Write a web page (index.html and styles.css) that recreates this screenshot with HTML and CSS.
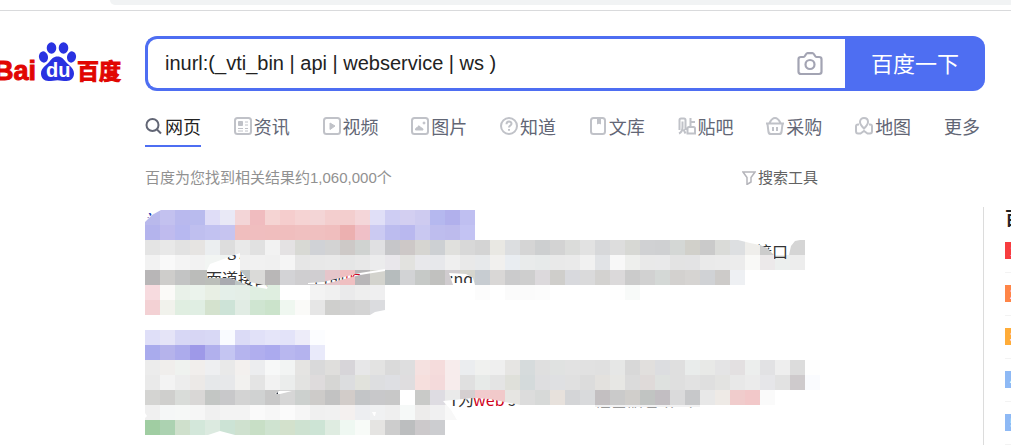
FILE: index.html
```html
<!DOCTYPE html>
<html lang="zh-CN">
<head>
<meta charset="utf-8">
<title>百度搜索</title>
<link rel="stylesheet" href="styles.css">
</head>
<body>
<div class="browser-edge"><div class="omnibox"></div></div>
<header class="header">
  <a class="logo" href="#" aria-label="百度">
    <svg width="125" height="50" viewBox="0 0 125 50">
      <text class="logo-latin" x="-6" y="41">Bai</text>
      <g fill="#2932e1">
        <ellipse cx="51.500" cy="9" rx="4.800" ry="5.800"/>
        <ellipse cx="63.500" cy="9" rx="4.800" ry="5.800"/>
        <ellipse cx="43.500" cy="18" rx="4.500" ry="5.700" transform="rotate(-12 43.500 18)"/>
        <ellipse cx="71.500" cy="18" rx="4.500" ry="5.700" transform="rotate(12 71.500 18)"/>
        <path d="M57.500 17.500c-4 0-6 2.500-8.200 5.300C46.500 26 41 29 41 34.500c0 4.500 3 7.500 7.500 7.500 3.500 0 6-.8 9-.8s5.500.8 9 .8c4.500 0 7.500-3 7.500-7.500 0-5.500-5.500-8.500-8.300-11.700-2.200-2.800-4.200-5.300-8.200-5.300z"/>
      </g>
      <text class="logo-du" x="46" y="38">du</text>
      <text class="logo-cjk" x="77" y="40">百度</text>
    </svg>
  </a>
  <form class="search">
    <input class="search-input" type="text" aria-label="搜索" value="inurl:(_vti_bin | api | webservice | ws )">
    <button class="camera" type="button" aria-label="按图片搜索">
      <svg width="26" height="24" viewBox="0 0 26 24" fill="none" stroke="#a3a4b3" stroke-width="2.200"><path d="M4 5h2.500c1.800 0 2-3.800 4-3.800h5c2 0 2.200 3.800 4 3.800H22c1.500 0 2.500.8 2.500 2.200v12.600c0 1.400-1 2.200-2.500 2.200H4c-1.500 0-2.500-.8-2.500-2.200V7.200C1.500 5.800 2.500 5 4 5z"/><circle cx="13" cy="12.500" r="4.500"/></svg>
    </button>
    <button class="submit" type="button">百度一下</button>
  </form>
</header>
<div class="main">
  <main class="content">
    <nav class="tabs">
      <a class="tab active" href="#"><svg class="icon" viewBox="0 0 18 18"><circle cx="7.500" cy="8" r="6"/><path d="M12 12.500l4 4"/></svg>网页</a>
      <a class="tab" href="#"><svg class="icon" viewBox="0 0 18 18"><rect x="1" y="1" width="16" height="16" rx="2.500"/><path class="solid" d="M4.500 4.500h4v4h-4z"/><path class="thin" d="M11 5h3M11 8h3M4 11.500h5M4 14h5M11 11.500h3M11 14h3"/></svg>资讯</a>
      <a class="tab" href="#"><svg class="icon" viewBox="0 0 18 18"><rect x="1" y="1" width="16" height="16" rx="2.500"/><path class="solid" d="M7 6l5 3-5 3.500z"/></svg>视频</a>
      <a class="tab" href="#"><svg class="icon" viewBox="0 0 18 18"><rect x="1" y="1" width="16" height="16" rx="2.500"/><circle class="solid" cx="13" cy="6" r="1"/><path class="solid" d="M4.500 13c-.5-2.500 2-2 2.500-3.500 1-1.500 2 0 2.500 1 1.500.5 2.500.5 2.500 2.500z"/></svg>图片</a>
      <a class="tab" href="#"><svg class="icon" viewBox="0 0 18 18"><circle cx="9" cy="9" r="8"/><path d="M6.500 7.300c0-3.500 5-3.500 5-.5 0 1.700-2.500 1.800-2.500 3.700M9 12v1.800"/></svg>知道</a>
      <a class="tab" href="#"><svg class="icon" viewBox="0 0 18 18"><rect x="2" y="1" width="14" height="16" rx="2.500"/><path class="solid" d="M8.500 2h3v5L10 6 8.500 7z"/></svg>文库</a>
      <a class="tab" href="#"><svg class="icon" viewBox="0 0 18 18"><path d="M1.500 13V3q0-1.500 1.500-1.500h3Q7.500 1.500 7.500 3v10M4.500 4.500V10q0 5-3.500 6.500M5.500 12.500l2 4M12.500 1v8.500M12.500 5H17M9.500 16.500v-5q0-1.500 1.500-1.500h4.500q1.500 0 1.500 1.500v5z"/></svg>贴吧</a>
      <a class="tab" href="#"><svg class="icon" viewBox="0 0 18 18"><path d="M0 6.500h18M1.500 7l1 8q.3 2 2.500 2h8q2.200 0 2.500-2l1-8M3.500 6Q6 1 9 1t5.500 5M7 10v4M11 10v4"/></svg>采购</a>
      <a class="tab" href="#"><svg class="icon" viewBox="0 0 18 18"><path d="M9 11.500C6 8.500 5 7 5 5c0-5.300 8-5.300 8 0 0 2-1 3.500-4 6.500zM4 7.500H3q-2 0-2 2V14q0 2.500 2 2.500h2.500L9 14l3.500 2.500H15q2 0 2-2.500V9.500q0-2-2-2h-1"/></svg>地图</a>
      <a class="tab" href="#">更多</a>
    </nav>
    <div class="tools">
      <span>百度为您找到相关结果约1,060,000个</span>
      <button class="filter" type="button"><svg width="14" height="14" viewBox="0 0 14 14" fill="none" stroke="#b5b5bb" stroke-width="1.500"><path d="M1 1h12L9 6.500V11l-4 2.500v-7z"/></svg>搜索工具</button>
    </div>
    <article class="result">
      <svg class="mosaic" width="690" height="105" viewBox="0 0 690 105">
        <defs>
          <clipPath id="a1"><path d="M0 3h9L7 5 0 10z"/></clipPath>
          <clipPath id="a2"><path d="M62 60l3-6 30-11v17l10 12 18 4-1 3-20-4-17-7H62z"/></clipPath>
          <clipPath id="a3"><path d="M163 73l15-1 37-9 25-4v2l-25 4-35 9h-17z"/></clipPath>
          <clipPath id="a4"><path d="M304 63l17 1 7 4 2 5h-22z"/></clipPath>
          <clipPath id="a5"><path d="M593 30l12 3 10 2 7 3 7 7v4h15l2-13 4-5 5-1z"/></clipPath>
        </defs>
        <g class="tiles" data-tiles="first"></g>
        <g class="brush">
          <path d="M0 0h16L7 5 0 12z"/>
          <path d="M62 60l3-6 30-11v17l10 12 18 4-1 3-20-4-17-7H62z"/>
          <path d="M163 73l15-1 37-9 25-4v2l-25 4-35 9h-17z"/>
          <path d="M304 63l17 1 7 4 2 7h-22z"/>
          <path d="M593 30l12 3 10 2 7 3 7 7h15l2-9 4-5 5-1z"/>
          <path d="M225 105l5-3 10-2v5z"/>
        </g>
        <g class="snippet">
          <g clip-path="url(#a1)"><text class="title" x="0" y="17">当</text></g>
          <g clip-path="url(#a2)"><text x="61" y="75">面道接口</text><text x="82" y="46">g /</text></g>
          <g clip-path="url(#a3)"><text x="168" y="75">目前<tspan class="hit">的web</tspan>接口</text></g>
          <g clip-path="url(#a4)"><text x="304" y="75">:nd</text></g>
          <g clip-path="url(#a5)"><text x="611" y="48">接口</text></g>
        </g>
      </svg>
    </article>
    <article class="result">
      <svg class="mosaic" width="690" height="105" viewBox="0 0 690 105">
        <defs>
          <clipPath id="b1"><path d="M298 71l30-3 17 1 30 6 25 2v1h-95z"/></clipPath>
          <clipPath id="b2"><path d="M450 77h105v1H450z"/></clipPath>
        </defs>
        <g class="tiles" data-tiles="second"></g>
        <g class="brush">
          <path d="M130 64l4-3h13l-12 3z"/>
          <path d="M63 105l12-4 15 4z"/>
          <path d="M0 83l2 3-2 2z"/>
          <path d="M227 82h4l-1 4h-1z"/>
          <path d="M298 71l30-3 17 1 30 6 25 2v13h-88l-6-10z"/>
        </g>
        <path fill="#f2f2f3" d="M450 75h105v2H450z"/>
        <path fill="#333b46" d="M131 64l2-2v2z"/>
        <g class="snippet">
          <g clip-path="url(#b1)"><text x="304" y="76">T<tspan x="313">为</tspan><tspan class="hit" x="328">web</tspan> s</text></g>
          <g clip-path="url(#b2)"><text class="faint" x="450" y="89">接口服务 的 方 法 与 调</text></g>
        </g>
      </svg>
    </article>
  </main>
  <aside class="side">
    <h2 class="side-title">百度热搜</h2>
    <ol class="hot">
      <li><span class="rank first">1</span></li>
      <li><span class="rank second">2</span></li>
      <li><span class="rank third">3</span></li>
      <li><span class="rank">4</span></li>
      <li><span class="rank">5</span></li>
    </ol>
  </aside>
</div>
<script src="mosaic.js"></script>
</body>
</html>
```
FILE: styles.css
```css
* { box-sizing: border-box; }
body {
  margin: 0;
  min-height: 100vh;
  display: flex;
  flex-direction: column;
  overflow: hidden;
  background: #fff;
  font-family: "Liberation Sans", "Noto Sans CJK SC", sans-serif;
}
a { color: inherit; text-decoration: none; }
button { border: 0; padding: 0; background: none; font: inherit; color: inherit; cursor: pointer; }
.browser-edge { height: 11px; padding-left: 110px; border-bottom: 1px solid #d9dadc; }
.omnibox { height: 5px; background: #f1f3f4; border-bottom-left-radius: 12px; }
.header { display: flex; align-items: center; padding: 25px 26px 0 0; }
.logo { flex: 0 0 145px; }
.logo svg { display: block; }
.logo-latin { font: bold 27px "Liberation Sans", sans-serif; fill: #e10602; stroke: #e10602; stroke-width: 1; }
.logo-du { font: bold 20px "Liberation Sans", sans-serif; fill: #fff; }
.logo-cjk { font: bold 22px "Noto Sans CJK SC", sans-serif; fill: #e10602; stroke: #e10602; stroke-width: 1; }
.search {
  flex: 1;
  display: flex;
  height: 55px;
  border: 3px solid #4e6ef2;
  border-right: 0;
  border-radius: 12px;
  background: #4e6ef2;
}
.search-input {
  flex: 1;
  min-width: 0;
  border: 0;
  outline: 0;
  padding: 0 0 0 17px;
  border-radius: 9px 0 0 9px;
  font: 20px "Liberation Sans", sans-serif;
  color: #222;
  background: #fff;
}
.camera { display: flex; align-items: center; padding: 0 22px 0 12px; background: #fff; }
.submit { width: 140px; padding-bottom: 4px; font-size: 22px; color: #fff; }
.main { flex: 1; display: flex; padding-left: 145px; }
.content { flex: 1; min-width: 0; }
.tabs { display: flex; justify-content: space-between; padding: 19px 3px 0 0; }
.tab {
  display: flex;
  align-items: center;
  gap: 2px;
  height: 37px;
  padding-bottom: 6px;
  font-size: 18px;
  white-space: nowrap;
  color: #626675;
}
.tab.active { color: #222; border-bottom: 2px solid #4e6ef2; padding-bottom: 4px; }
.icon { width: 18px; height: 18px; fill: none; stroke: #c0c2c8; stroke-width: 2; }
.icon .solid { fill: #c0c2c8; stroke-width: 1; }
.icon .thin { stroke-width: 1; }
.active .icon { stroke: #626675; }
.tools {
  display: flex;
  justify-content: space-between;
  max-width: 673px;
  margin: 19px 0 20px;
  font-size: 15px;
  line-height: 24px;
  color: #9195a3;
}
.tools span { color: #919191; }
.filter { display: flex; align-items: center; gap: 2px; color: #626262; }
.result { margin-bottom: 15px; }
.result:last-child { margin-bottom: 0; }
.mosaic { display: block; overflow: visible; }
.tiles { shape-rendering: crispEdges; }
.brush { fill: #fff; }
.snippet { font: 16px "Noto Sans CJK SC", sans-serif; fill: #333; }
.snippet .title { font-size: 20px; fill: #2440b3; }
.snippet .hit { fill: #d0021b; }
.snippet .faint { fill: #999; }
.side {
  flex: 0 0 28px;
  margin-top: 116px;
  padding-left: 21px;
  border-left: 1px solid #dcdcdc;
  overflow: hidden;
  white-space: nowrap;
}
.side-title { margin: 0 0 11px; font-size: 18px; line-height: 24px; color: #222; }
.hot { list-style: none; margin: 0; padding: 0; }
.hot li { height: 43px; }
.hot li::after { content: ""; display: block; margin-top: 13px; border-top: 1px solid #f3f3f3; }
.rank { display: block; width: 18px; height: 17px; background: #8eb9f5; color: #fff; font-size: 15px; line-height: 17px; text-align: center; }
.rank.first { background: #f73d3f; }
.rank.second { background: #ff8547; }
.rank.third { background: #ffac38; }
```
FILE: mosaic.js
```js
// Tile colours row by row; two digits stand for a grey level.
const TILE = 15;
const rows = {
  first: [
    "b9b9ec c3c1ef b9b9ee b9bbee dfddf7 e9e9f6 f3d5d7 f0bcbf f5d4d3 f5cdcd f5d3d3 f3d5d6 f3cece f3cece f4d6d9 e0dff7 cecdf3 d3cff1 cecbf0 b5b8ef b1b0ec bfbff1",
    "b4b4ed bfbbee b7b8f0 bfbfef c2c2f1 c6c4f0 f0bebe f0bebf f0bebe f0bebe f0c0c0 f0c0c0 f0bebe ecb0b0 f0c0c7 cbcaf2 bcbcef b9b8ef c9c8f1 bebdee bdbbed c3c3f3",
    "e4 e8 e2 e6e4e2 ebeef0 dd e9 e1 f2 e4e2e3 d8d9d4 d0d2d6 d3 cdc9c7 d0d3d1 e0e0e2 c6c6c9 cdc8c7 d6d5d1 cdd0d3 e0e0dd d8 d4 e9e8e3 dcdee0 d5 cdcfd0 d3 dbdcda e2 d7d8da dd d7d8d4 d0d1d3 cfd0d2 d4d7d5 d1d0ca ca dadbd8 dddfe1 efeeeb cc d8 d5",
    "f2 f9 f4 f2 f2f5f3 f0f4f2 f0 f1 f0 f5 e6 e8 e9 e5e6e6 e8 ececed e9e7eb e2e2df e8e8eb e7e8eb ef e9 e7e9eb f1f0ee e9edf1 e9ebeb e7eaea e9 ea f1 e1e3e6 f8 eeefed e9 e9e9ea e3 e3e3e4 ea eb ec f9f9f7 ece9ea ecefee ed",
    "b8b6b7 cecdcb c3c4c4 bbbcba bbbeb9 a8aab0 bcc4c4 dadad8 b9b7b7 d3d3d6 cfced0 d0ced1 e5c5ca efbfc1 b8b6b8 d3d3cd b6bcbd d2d3d5 c6c9c7 c1c1bf d0cccf d5d5ce c7ccd1 d9d7d6 cbcbcc ce dcd9dc cfcecb d8d9dd dadadb d3d2d0 dbd9da cb d1 d4d8d6 d3d1cf d6d4d2 d0d2d5 cdcbc9 eef0f3",
    "f7dbdf fbfaf8 e9f1e9 ebf3ec e8efe4 e4efe9 e4eee7 dfeee1 dfeee0 ff ff f3 f0 eaeaeb ee efeff0 ff ff ff ff ff ff fc ff fb fb fc ff ff ff ff fe f8faf9",
    "f3d1d4 f1f2ec e0eee1 e0eee3 d4e2ce cde3d7 e1ece4 cfe5d1 cbe3cb eff7f0 fafaf8 e6 cfcfcd d1 d4 dbdcdf"
  ],
  second: [
    "dfdff8 e5e4f7 d7d7f5 d7d6f4 d8d8f5 f9fbff dbdbf6 e1e1f8 e5e5f9 e3e3f9 edecf9 fcfdff",
    "a9abed b5b3eb acabec 9e99e8 b1b0ed c4c5f2 b5b4ee b0aeee abaaee b8b7ef b4b3ee e9eafa",
    "ec f0eeec eff2ef f1eeec eeeff1 e9 f3f0ee ecedef f7f8f8 f2f4f3 e5e4e2 d9d9da dfdedc d7d5d9 e7e7e8 e3e3e2 da dededf f5e1e0 f5dcdc f7ecec ebedef f0f1ef ef e6e5e3 d6dbdc df e0e2e1 e2 e1 e0 e6e7e6 d8 e1dfdd dcdde0 df e9eceb e8e9e7 e4e4e5 e3e0e1 eceeed e2e2e4 ee dc fe",
    "ea f3 ed ece9e7 e6e8ea e7e8ea f2f1ef e4 f2 ebedec e3e3e1 dedbdc d6d6d4 dcdddf e1e2dc dddee0 dedfe3 dfdddf f6dfdd f4dadb f7ecec e0 e7eae8 e4 dfe0da d4dadb dedee0 dfe0e2 e0 dc e3e1de e7e7e4 db dfdad9 dee1df df e2 df e3e3e1 e8 eb e6e6e9 e2 cecacc fafbfe",
    "d4d4d2 cfcfcd d9dcd9 d9d7d6 c3c6c4 c8c8ca d3 d0d2d2 c8 d6 ccd0ce cdcbc9 c2 d2ccc9 c3c5c7 c8c8ca c8 ff c9cac8 dedce2 ea d5cfd0 f1cbcd f1c9ca e6e5e2 dc d7d9d8 e7e1dc d4d5d7 d9dadc c3bfc1 ca d0cecb c1c4c2 c2bec2 dadadb c7c8ca e8 eeeae6 f0cccc f2c8c9 fa",
    "f0 f5f7f7 f6f8f7 f6 f0 f3 f3 fa f7 fb f6 f0 f1 f4f0ef edeef1 f0f1f2 ef f6f9f8 edeceb f0f0f1 f8",
    "a0cda2 acd2b1 cfe0cc d3e7da dceae0 cce3d5 cfe1cf c8dfc6 cfe3d0 d3e1cc cee2d1 cde4d5 dfece1 eff8f2 f8fbf8 e5e4e2 cd bcbebf ccc9cb cccdd0"
  ]
};

document.querySelectorAll(".tiles").forEach(group => {
  rows[group.dataset.tiles].forEach((row, y) => {
    row.split(" ").forEach((code, x) => {
      const rect = document.createElementNS("http://www.w3.org/2000/svg", "rect");
      rect.setAttribute("x", x * TILE);
      rect.setAttribute("y", y * TILE);
      rect.setAttribute("width", TILE);
      rect.setAttribute("height", TILE);
      rect.setAttribute("fill", "#" + (code.length === 2 ? code.repeat(3) : code));
      group.append(rect);
    });
  });
});
```
